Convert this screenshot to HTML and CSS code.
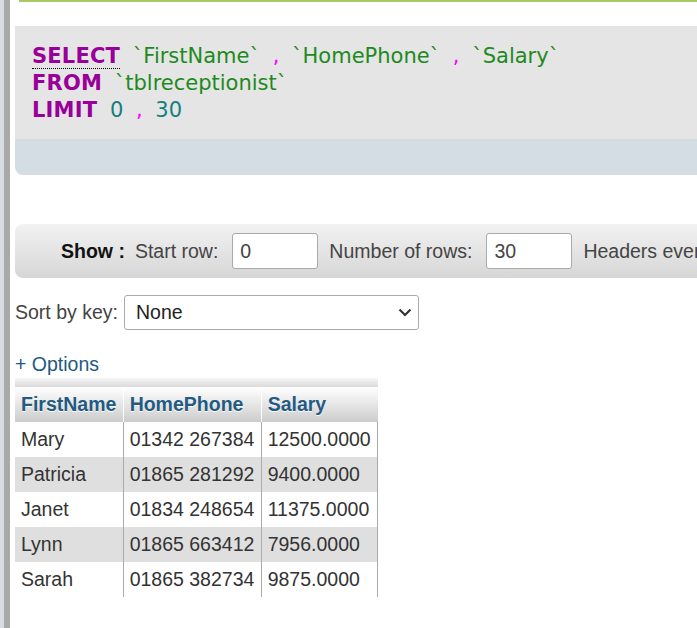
FILE: index.html
```html
<!DOCTYPE html>
<html>
<head>
<meta charset="utf-8">
<link rel="stylesheet" href="styles.css">
</head>
<body>
<div class="layout">
  <div class="nav-edge"></div>
  <div class="resizer"></div>
  <div class="main">
    <div class="success-line"></div>
    <div class="sql-box">
      <div class="sql-code">
        <div><abbr class="kw">SELECT</abbr> <span class="id">`FirstName`</span> <span class="pn">,</span> <span class="id">`HomePhone`</span> <span class="pn">,</span> <span class="id">`Salary`</span></div>
        <div><span class="kw">FROM</span> <span class="id">`tblreceptionist`</span></div>
        <div><span class="kw">LIMIT</span> <span class="num">0</span> <span class="pn">,</span> <span class="num">30</span></div>
      </div>
      <div class="sql-tools"></div>
    </div>

    <div class="navbar">
      <span class="show-label">Show :</span>
      <span class="lbl">Start row:</span>
      <input class="num-input" type="text" value="0">
      <span class="lbl">Number of rows:</span>
      <input class="num-input" type="text" value="30">
      <span class="lbl">Headers every</span>
    </div>

    <div class="sort-row">
      <span class="lbl-sort">Sort by key:</span>
      <div class="select">
        <span>None</span>
        <svg class="chev" width="14" height="9" viewBox="0 0 14 9"><path d="M1.5 1.5 L7 7 L12.5 1.5" fill="none" stroke="#333" stroke-width="2.2"/></svg>
      </div>
    </div>

    <a class="options">+ Options</a>

    <div class="table-wrap">
      <div class="table-top"></div>
      <table class="data">
        <thead>
          <tr><th>FirstName</th><th>HomePhone</th><th>Salary</th></tr>
        </thead>
        <tbody>
          <tr><td>Mary</td><td>01342 267384</td><td>12500.0000</td></tr>
          <tr class="even"><td>Patricia</td><td>01865 281292</td><td>9400.0000</td></tr>
          <tr><td>Janet</td><td>01834 248654</td><td>11375.0000</td></tr>
          <tr class="even"><td>Lynn</td><td>01865 663412</td><td>7956.0000</td></tr>
          <tr><td>Sarah</td><td>01865 382734</td><td>9875.0000</td></tr>
        </tbody>
      </table>
    </div>
  </div>
</div>
</body>
</html>
```
FILE: styles.css
```css
html, body {
  margin: 0;
  padding: 0;
  background: #fff;
  height: 100%;
  overflow: hidden;
}
body {
  font-family: "Liberation Sans", Arial, sans-serif;
  font-size: 19.5px;
  color: #444;
}
.layout {
  display: flex;
  height: 628px;
}
.nav-edge {
  width: 4px;
  background: #d9dde1;
  flex: none;
}
.resizer {
  width: 6px;
  background: #a9a9a9;
  flex: none;
}
.main {
  flex: 1;
  min-width: 0;
  padding-left: 5px;
  overflow: hidden;
}
.success-line {
  margin-left: 4px;
  height: 2px;
  background: #a8c964;
}
.sql-box {
  margin-top: 24px;
  width: 800px;
}
.sql-code {
  background: #e5e5e5;
  padding: 17px 0 15px 17px;
  font-family: "DejaVu Sans", Verdana, sans-serif;
  font-size: 21px;
  line-height: 27px;
  word-spacing: 6px;
}
.sql-tools {
  background: #d5dde4;
  height: 36px;
  border-bottom-left-radius: 8px;
}
.kw {
  color: #990099;
  font-weight: bold;
  text-decoration: none;
  letter-spacing: 0.2px;
}
abbr.kw {
  border-bottom: 1px dotted #000;
}
.id { color: #1e8a1e; }
.pn { color: #ff00ff; }
.num { color: #128080; }

.navbar {
  margin-top: 49px;
  width: 800px;
  height: 54px;
  box-sizing: border-box;
  display: flex;
  align-items: center;
  padding-left: 46px;
  background: linear-gradient(#f2f2f2, #d6d6d6);
  border-top-left-radius: 8px;
  border-bottom-left-radius: 8px;
  white-space: nowrap;
}
.show-label {
  font-weight: bold;
  color: #111;
  margin-right: 10px;
}
.lbl {
  color: #444;
}
.num-input {
  width: 86px;
  height: 36px;
  box-sizing: border-box;
  border: 1px solid #aaa;
  border-radius: 3px;
  font-family: inherit;
  font-size: 19.5px;
  color: #444;
  padding: 0 0 0 7px;
  margin: 0 11px 0 14px;
  background: #fff;
}
.sort-row {
  margin-top: 17px;
  display: flex;
  align-items: center;
}
.lbl-sort {
  margin-right: 6px;
}
.select {
  width: 295px;
  height: 35px;
  box-sizing: border-box;
  border: 1px solid #aaa;
  border-radius: 3px;
  display: flex;
  align-items: center;
  justify-content: space-between;
  padding: 0 6px 0 11px;
  color: #222;
}
.chev {
  display: block;
}
.options {
  display: block;
  margin-top: 22px;
  color: #235a81;
  line-height: 24px;
}
.table-wrap {
  margin-top: 2px;
  width: 363px;
}
.table-top {
  height: 9px;
  background: linear-gradient(#f6f6f6, #dadada);
}
.data {
  border-collapse: collapse;
  width: 363px;
}
.data th {
  height: 35px;
  padding: 0 6px 0 6px;
  text-align: left;
  font-weight: bold;
  color: #235a81;
  text-shadow: 0 1px 0 #fff;
  background: linear-gradient(#ffffff, #cccccc);
  border-left: 1px solid #fff;
  white-space: nowrap;
}
.data th:first-child { border-left: none; }
.data td {
  height: 35px;
  padding: 0 6px 0 6px;
  color: #333;
  border-left: 1px solid #aaa;
  border-right: 1px solid #aaa;
  white-space: nowrap;
}
.data td:first-child { border-left: none; }
.data tr.even td { background: #dfdfdf; }
```
